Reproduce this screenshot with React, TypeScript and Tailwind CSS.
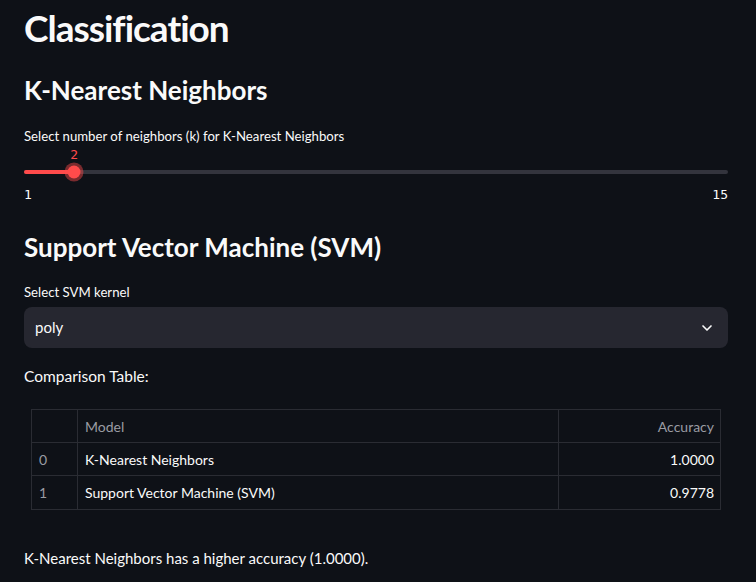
import { ChevronDown } from 'lucide-react';

const rows = [
    { idx: 0, model: 'K-Nearest Neighbors', acc: '1.0000' },
    { idx: 1, model: 'Support Vector Machine (SVM)', acc: '0.9778' },
];

export default function App() {
    const k = 2;
    const min = 1;
    const max = 15;
    const pct = ((k - min) / (max - min)) * 100;

    return (
        <div className="min-h-screen bg-[#0e1117] text-[#fafafa] pl-6 pr-7 font-['Lato','Noto_Sans',sans-serif]">
            <h1 className="pt-[4px] text-[37px] leading-[48px] font-bold tracking-[-1px]">Classification</h1>

            <h2 className="mt-[23px] text-[26px] leading-[31px] font-bold">K-Nearest Neighbors</h2>

            {/* slider */}
            <div className="mt-[20px] text-[13.2px] leading-[20px]">Select number of neighbors (k) for K-Nearest Neighbors</div>
            <div className="relative h-[86px]">
                <div className="absolute left-0 right-0 top-[24px] h-1 rounded-full bg-[#33343d]" />
                <div className="absolute left-0 top-[24px] h-1 rounded-full bg-[#ff4b4b]" style={{ width: `${pct}%` }} />
                <div className="absolute top-[26px]" style={{ left: `${pct}%` }}>
                    <div className="-translate-x-1/2 -translate-y-1/2 w-[13px] h-[13px] rounded-full bg-[#ff4b4b] shadow-[0_0_0_3px_rgba(255,75,75,0.45)]" />
                    <div className="absolute -translate-x-1/2 top-[-25px] text-[13px] leading-[16px] text-[#ff4b4b] font-['DejaVu_Sans_Mono',monospace]">{k}</div>
                </div>
                <div className="absolute left-0 right-0 top-[41px] flex justify-between text-[13px] leading-[16px] font-['DejaVu_Sans_Mono',monospace] text-[#fafafa]">
                    <span>{min}</span>
                    <span>{max}</span>
                </div>
            </div>

            <h2 className="text-[26px] leading-[31px] font-bold">Support Vector Machine (SVM)</h2>

            <div className="mt-[19px] text-[13.2px] leading-[20px]">Select SVM kernel</div>
            <div className="mt-[5px] h-[41px] rounded-lg bg-[#262730] flex items-center justify-between pl-[11px] pr-[13px]">
                <span className="text-[15px]">poly</span>
                <ChevronDown size={16} strokeWidth={2.5} />
            </div>

            <div className="mt-[16px] text-[15.5px] leading-[24px]">Comparison Table:</div>

            <div className="mt-[21px] mx-[7px] border border-[#2a2c33] text-[14px]">
                <div className="grid grid-cols-[46px_481px_1fr] h-[33px] items-center border-b border-[#2a2c33] text-[#9a9ca3]">
                    <div className="h-full border-r border-[#2a2c33]" />
                    <div className="h-full flex items-center px-[7px] border-r border-[#2a2c33]">Model</div>
                    <div className="pr-[6px] text-right">Accuracy</div>
                </div>
                {rows.map((r, i) => (
                    <div key={r.idx} className={`grid grid-cols-[46px_481px_1fr] h-[33px] items-center ${i === 0 ? 'border-b border-[#2a2c33]' : ''}`}>
                        <div className="h-full flex items-center px-[7px] border-r border-[#2a2c33] text-[#9a9ca3]">{r.idx}</div>
                        <div className="h-full flex items-center px-[7px] border-r border-[#2a2c33]">{r.model}</div>
                        <div className="pr-[6px] text-right">{r.acc}</div>
                    </div>
                ))}
            </div>

            <p className="mt-[36px] text-[15px] leading-[24px]">K-Nearest Neighbors has a higher accuracy (1.0000).</p>
        </div>
    );
}
